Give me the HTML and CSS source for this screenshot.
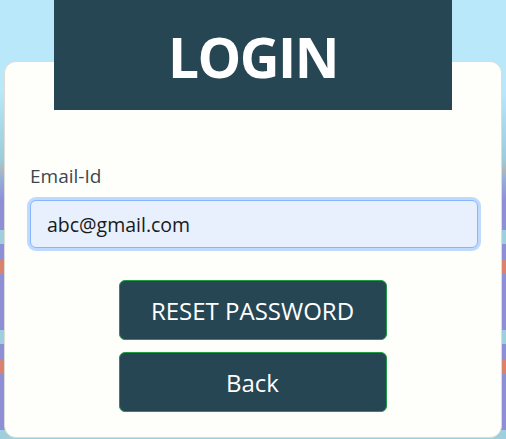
FILE: index.html
```html
<!DOCTYPE html>
<html>
<head>
<meta charset="utf-8">
<link rel="stylesheet" href="styles.css">
</head>
<body>
<div class="page">
  <div class="title-box"><h1 class="title">LOGIN</h1></div>
  <div class="card">
    <label class="label" for="email">Email-Id</label>
    <input class="input" id="email" type="email" value="abc@gmail.com">
    <div class="actions">
      <button class="btn">RESET PASSWORD</button>
      <button class="btn">Back</button>
    </div>
  </div>
</div>
</body>
</html>
```
FILE: styles.css
```css
html, body {
  margin: 0;
  height: 100%;
}
body {
  font-family: "Open Sans", "Noto Sans", sans-serif;
  background:
    linear-gradient(to bottom, #b8e8fa 0, #b8e8fa 90px, #9ccbd9 160px, rgba(156,203,217,0) 200px),
    repeating-linear-gradient(to bottom, #8f8fd8 0, #8f8fd8 30px, #9dd0dc 30px, #9dd0dc 44px, #8f8fd8 44px, #8f8fd8 60px, #d9826e 60px, #d9826e 74px, #8f8fd8 74px, #8f8fd8 100px);
  overflow: hidden;
}
.page {
  display: flex;
  flex-direction: column;
  align-items: center;
}
.title-box {
  width: 398px;
  height: 110px;
  background: #264653;
  display: flex;
  align-items: center;
  justify-content: center;
  position: relative;
  z-index: 1;
}
.title {
  margin: 0;
  color: #ffffff;
  font-size: 55px;
  font-weight: 700;
  line-height: 1;
  letter-spacing: -1.5px;
  padding-top: 2px;
}
.card {
  align-self: stretch;
  margin: -49px 4px 0 4px;
  background: #fefefa;
  border: 1px solid #dcdcd6;
  border-radius: 12px;
  padding: 101px 23px 25px 25px;
  display: flex;
  flex-direction: column;
}
.label {
  font-size: 19px;
  line-height: 27px;
  color: #3a4750;
  margin-bottom: 10px;
}
.input {
  box-sizing: border-box;
  height: 48px;
  width: 100%;
  font-family: inherit;
  font-size: 19.5px;
  color: #1a1a1a;
  background: #e8f0fe;
  border: 1px solid #86b7fe;
  border-radius: 6px;
  box-shadow: 0 0 0 3px #c0dafd;
  padding: 0 16px;
  outline: none;
}
.actions {
  margin-top: 32px;
  padding-right: 3px;
  display: flex;
  flex-direction: column;
  align-items: center;
  gap: 12px;
}
.btn {
  width: 268px;
  height: 60px;
  background: #264653;
  border: 1px solid #1f9a45;
  border-radius: 6px;
  color: #ffffff;
  font-family: inherit;
  font-size: 24px;
  cursor: pointer;
}
```
